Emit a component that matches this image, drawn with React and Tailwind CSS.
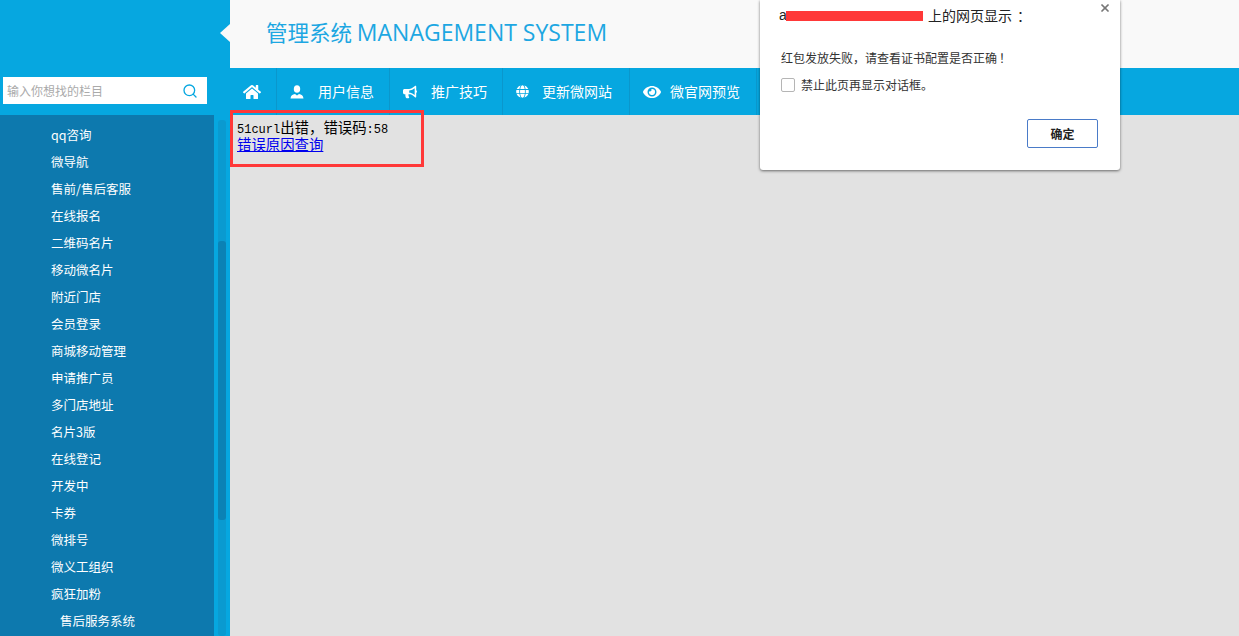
import React from 'react';
import { FaHome, FaBullhorn, FaGlobe, FaEye } from 'react-icons/fa';
import { Search, X } from 'lucide-react';

const cjk = { fontFamily: '"Noto Sans CJK SC", "Liberation Sans", sans-serif' };
const mono = { fontFamily: '"Liberation Mono", monospace' };

const menu = [
  'qq咨询', '微导航', '售前/售后客服', '在线报名', '二维码名片', '移动微名片', '附近门店',
  '会员登录', '商城移动管理', '申请推广员', '多门店地址', '名片3版', '在线登记', '开发中',
  '卡券', '微排号', '微义工组织', '疯狂加粉',
];

function UserIcon({ size }) {
  return (
    <svg width={size} height={size} viewBox="0 0 14 14" fill="currentColor">
      <ellipse cx="7" cy="4" rx="3.2" ry="3.8" />
      <path d="M0.5 13.5 C0.8 10.5 2.5 9.6 5 9 L7 10.5 L9 9 C11.5 9.6 13.2 10.5 13.5 13.5 Z" />
    </svg>
  );
}

const nav = [
  { label: '用户信息', Icon: UserIcon, size: 14, width: 'w-[113px]', gap: 'gap-[14px]' },
  { label: '推广技巧', Icon: FaBullhorn, size: 14, width: 'w-[113px]', gap: 'gap-[14px]' },
  { label: '更新微网站', Icon: FaGlobe, size: 13, width: 'w-[127px]', gap: 'gap-[13px]' },
  { label: '微官网预览', Icon: FaEye, size: 18, width: 'w-[127px]', gap: 'gap-[9px]' },
];

function Sidebar() {
  return (
    <aside className="w-[230px] h-[636px] shrink-0 flex flex-col bg-[#06a7e0] overflow-hidden">
      <div className="h-[77px] shrink-0" />
      <div className="mx-[3px] w-[204px] h-[27px] shrink-0 bg-white flex items-center justify-between pl-[4px] pr-[9px]">
        <span className="text-[12px] text-[#aaaaaa]">输入你想找的栏目</span>
        <Search size={16} strokeWidth={2} className="text-[#06a7e0]" />
      </div>
      <div className="flex flex-1 mt-[11px] min-h-0">
        <ul className="w-[214px] bg-[#0d79ae] pt-[6px] text-white text-[12.5px]">
          {menu.map((item) => (
            <li key={item} className="h-[27px] pl-[51px] leading-[27px]">{item}</li>
          ))}
          <li className="h-[27px] pl-[60px] leading-[27px]">售后服务系统</li>
        </ul>
        <div className="ml-[4px] mt-[5px] w-[8px] h-[516px] rounded-[3px] bg-[#0a9ad0] pt-[121px]">
          <div className="h-[279px] rounded-[3px] bg-[#0b82b5]" />
        </div>
      </div>
    </aside>
  );
}

function Header() {
  return (
    <header className="relative h-[68px] bg-[#f9f9f9] flex items-center pl-[36px]">
      <span className="absolute left-[-10px] top-[24px] border-y-[9px] border-r-[10px] border-y-transparent border-r-[#f9f9f9]" />
      <h1 className="text-[21.5px] font-normal text-[#1da7e2] -mt-[3px]">
        管理系统 <span className="text-[23px]" style={{ fontFamily: '"Open Sans", sans-serif' }}>MANAGEMENT SYSTEM</span>
      </h1>
    </header>
  );
}

function NavBar() {
  return (
    <nav className="h-[47px] bg-[#06a7e0] flex text-white text-[14px]">
      <div className="w-[47px] border-r border-[#0a97cc] flex items-center justify-center pr-[2px]">
        <FaHome size={18} />
      </div>
      {nav.map(({ label, Icon, size, width, gap }) => (
        <div key={label} className={`${width} ${gap} pl-[13px] border-r border-[#0a97cc] flex items-center`}>
          <Icon size={size} />
          <span>{label}</span>
        </div>
      ))}
    </nav>
  );
}

function ErrorBox() {
  return (
    <div className="absolute left-0 top-[-5px] w-[194px] h-[57px] border-[3px] border-[#ff3838] pl-[4px] pt-[7px] text-black text-[14.4px] leading-[14px]">
      <div className="h-[17px]"><span className="text-[12px]" style={mono}>51curl</span>出错，错误码<span className="text-[12px]" style={mono}>:58</span></div>
      <a href="#" className="text-[#0000ee] underline">错误原因查询</a>
    </div>
  );
}

function Dialog() {
  return (
    <div className="absolute left-[760px] top-0 w-[360px] h-[170px] bg-white rounded-b-[3px] shadow-[0_1px_3px_rgba(0,0,0,0.55)] text-[#333333]">
      <X size={12} strokeWidth={3.5} className="absolute right-[9px] top-[2px] text-[#777777]" />
      <div className="flex items-center h-[16px] mt-[7px] pl-[19px] text-[14px] text-[#222222]">
        <span className="w-[7px]" style={{ fontFamily: '"Liberation Sans", sans-serif' }}>a</span>
        <span className="w-[137px] h-[10px] bg-[#ff3838] mt-[2px]" />
        <span className="ml-[5px]">上的网页显示</span>
        <span className="ml-[5px]">：</span>
      </div>
      <p className="mt-[27px] pl-[21px] text-[12px] leading-[16px]">红包发放失败，请查看证书配置是否正确<span className="ml-[2px]">！</span></p>
      <label className="flex items-center mt-[11px] pl-[21px] text-[12px] leading-[16px]">
        <span className="w-[14px] h-[14px] mr-[6px] bg-white border border-[#b5b5b5] rounded-[2px]" />
        禁止此页再显示对话框。
      </label>
      <button className="absolute right-[22px] top-[119px] w-[71px] h-[29px] bg-white border border-[#4a7bc8] rounded-[2px] text-[12px] font-bold text-[#222222]">
        确定
      </button>
    </div>
  );
}

export default function App() {
  return (
    <div className="relative w-[1239px] h-[636px] flex overflow-hidden bg-[#e2e2e2]" style={cjk}>
      <Sidebar />
      <main className="flex-1 flex flex-col min-w-0">
        <Header />
        <NavBar />
        <div className="relative flex-1">
          <ErrorBox />
        </div>
      </main>
      <Dialog />
    </div>
  );
}
